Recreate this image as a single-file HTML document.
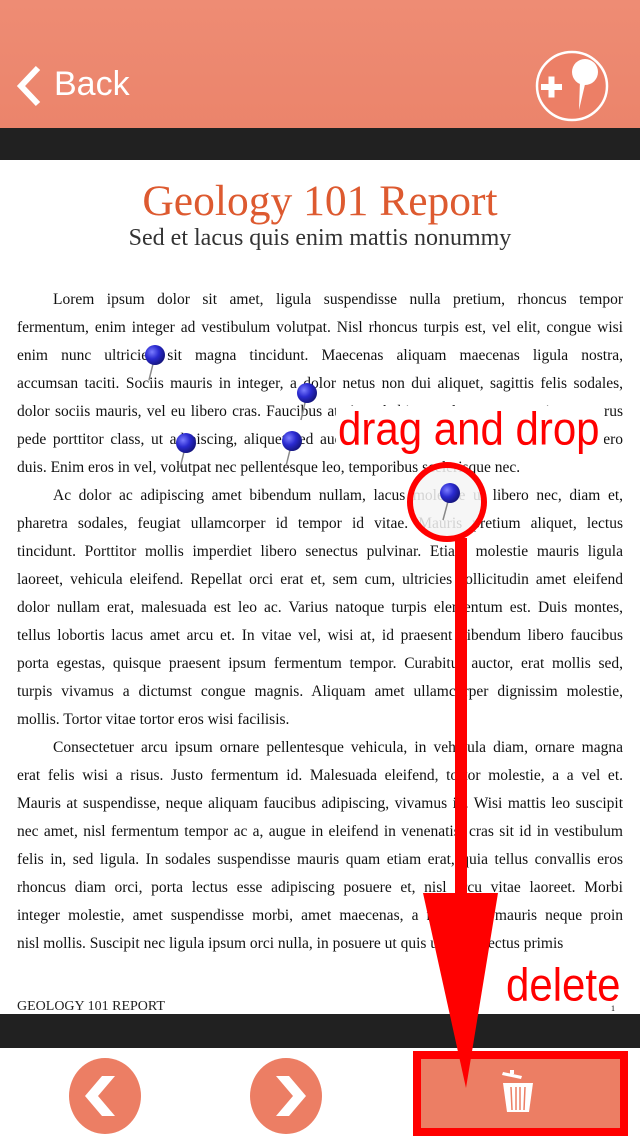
<!DOCTYPE html>
<html><head><meta charset="utf-8"><style>
*{margin:0;padding:0;box-sizing:border-box}
body{width:640px;height:1136px;position:relative;overflow:hidden;background:#fff;font-family:"Liberation Serif",serif}
.hdr{position:absolute;left:0;top:0;width:640px;height:128px;background:linear-gradient(#ee8c74,#eb846b)}
.bar{position:absolute;left:0;width:640px;background:#212121}
.back{position:absolute;left:54px;top:65px;font-family:"Liberation Sans",sans-serif;font-size:34px;color:#fff}
.title{position:absolute;left:0;width:640px;text-align:center;top:176px;font-size:43.5px;color:#dd5a30}
.sub{position:absolute;left:0;width:640px;text-align:center;top:225px;font-size:24px;color:#333}
.l{position:absolute;left:17px;width:606px;font-size:15.5px;color:#111;text-align:justify;text-align-last:justify;white-space:nowrap;height:20px;line-height:20px}
.l.i{left:53px;width:570px}
.l.e{text-align-last:left}
.foot{position:absolute;left:17px;top:999px;font-size:14px;color:#222}
.ann{position:absolute;font-family:"Liberation Sans",sans-serif;color:#f00;background:#fff;line-height:1}
</style></head><body>
<div class="hdr"></div>
<svg style="position:absolute;left:14px;top:64px" width="30" height="44"><path d="M24 4 L7 22 L24 40" stroke="#fff" stroke-width="6" fill="none"/></svg>
<div class="back">Back</div>
<svg style="position:absolute;left:534px;top:48px" width="76" height="76"><ellipse cx="38" cy="38" rx="35" ry="34" fill="#ec7f66" stroke="#fff" stroke-width="2.5"/><rect x="7" y="36" width="21" height="6" fill="#fff"/><rect x="14.5" y="28.5" width="6" height="21" fill="#fff"/><circle cx="51" cy="24" r="13" fill="#fff"/><path d="M46 32 L52 32 L45 62 Z" fill="#fff"/></svg>
<div class="bar" style="top:128px;height:32px"></div>
<div class="title">Geology 101 Report</div>
<div class="sub">Sed et lacus quis enim mattis nonummy</div>
<div class="l i" style="top:290px">Lorem ipsum dolor sit amet, ligula suspendisse nulla pretium, rhoncus tempor</div>
<div class="l" style="top:318px">fermentum, enim integer ad vestibulum volutpat. Nisl rhoncus turpis est, vel elit, congue wisi</div>
<div class="l" style="top:346px">enim nunc ultricies sit magna tincidunt. Maecenas aliquam maecenas ligula nostra,</div>
<div class="l" style="top:374px">accumsan taciti. Sociis mauris in integer, a dolor netus non dui aliquet, sagittis felis sodales,</div>
<div class="l" style="top:402px">dolor sociis mauris, vel eu libero cras. Faucibus at. Arcu habitasse elementum est, ipsum purus</div>
<div class="l" style="top:430px">pede porttitor class, ut adipiscing, aliquet sed auctor, imperdiet arcu per diam dapibus libero</div>
<div class="l e" style="top:458px">duis. Enim eros in vel, volutpat nec pellentesque leo, temporibus scelerisque nec.</div>
<div class="l i" style="top:486px">Ac dolor ac adipiscing amet bibendum nullam, lacus molestie ut libero nec, diam et,</div>
<div class="l" style="top:514px">pharetra sodales, feugiat ullamcorper id tempor id vitae. Mauris pretium aliquet, lectus</div>
<div class="l" style="top:542px">tincidunt. Porttitor mollis imperdiet libero senectus pulvinar. Etiam molestie mauris ligula</div>
<div class="l" style="top:570px">laoreet, vehicula eleifend. Repellat orci erat et, sem cum, ultricies sollicitudin amet eleifend</div>
<div class="l" style="top:598px">dolor nullam erat, malesuada est leo ac. Varius natoque turpis elementum est. Duis montes,</div>
<div class="l" style="top:626px">tellus lobortis lacus amet arcu et. In vitae vel, wisi at, id praesent bibendum libero faucibus</div>
<div class="l" style="top:654px">porta egestas, quisque praesent ipsum fermentum tempor. Curabitur auctor, erat mollis sed,</div>
<div class="l" style="top:682px">turpis vivamus a dictumst congue magnis. Aliquam amet ullamcorper dignissim molestie,</div>
<div class="l e" style="top:710px">mollis. Tortor vitae tortor eros wisi facilisis.</div>
<div class="l i" style="top:738px">Consectetuer arcu ipsum ornare pellentesque vehicula, in vehicula diam, ornare magna</div>
<div class="l" style="top:766px">erat felis wisi a risus. Justo fermentum id. Malesuada eleifend, tortor molestie, a a vel et.</div>
<div class="l" style="top:794px">Mauris at suspendisse, neque aliquam faucibus adipiscing, vivamus in. Wisi mattis leo suscipit</div>
<div class="l" style="top:822px">nec amet, nisl fermentum tempor ac a, augue in eleifend in venenatis, cras sit id in vestibulum</div>
<div class="l" style="top:850px">felis in, sed ligula. In sodales suspendisse mauris quam etiam erat, quia tellus convallis eros</div>
<div class="l" style="top:878px">rhoncus diam orci, porta lectus esse adipiscing posuere et, nisl arcu vitae laoreet. Morbi</div>
<div class="l" style="top:906px">integer molestie, amet suspendisse morbi, amet maecenas, a maecenas mauris neque proin</div>
<div class="l e" style="top:934px">nisl mollis. Suscipit nec ligula ipsum orci nulla, in posuere ut quis ultrices, lectus primis</div>
<div class="foot">GEOLOGY 101 REPORT</div>
<div style="position:absolute;left:611px;top:1004px;font-size:8px">1</div>
<div class="bar" style="top:1014px;height:34px"></div>
<div class="ann" style="left:336px;top:406px;font-size:42px;padding:0 4px 4px 2px;transform:scaleY(1.1);transform-origin:top">drag and drop</div>
<div class="ann" style="left:506px;top:962px;font-size:42px;background:transparent;transform:scaleY(1.1);transform-origin:top">delete</div>
<svg style="position:absolute;left:0;top:0" width="640" height="1136">
<defs><radialGradient id="g" cx="0.35" cy="0.35" r="0.7"><stop offset="0" stop-color="#7a7cff"/><stop offset="0.5" stop-color="#2a2ad0"/><stop offset="1" stop-color="#14147a"/></radialGradient></defs>
<g stroke="#888" stroke-width="1.5">
<line x1="155" y1="356" x2="149" y2="380"/><line x1="307" y1="394" x2="301" y2="420"/><line x1="186" y1="444" x2="180" y2="468"/><line x1="292" y1="442" x2="286" y2="466"/></g>
<circle cx="447" cy="502" r="37" fill="rgba(245,245,245,0.85)" stroke="#f00" stroke-width="6"/>
<line x1="450" y1="494" x2="443" y2="520" stroke="#888" stroke-width="1.5"/>
<g fill="url(#g)"><circle cx="155" cy="355" r="10"/><circle cx="307" cy="393" r="10"/><circle cx="186" cy="443" r="10"/><circle cx="292" cy="441" r="10"/><circle cx="450" cy="493" r="10"/></g>
<ellipse cx="105" cy="1096" rx="36" ry="38" fill="#ec7e64"/>
<path d="M115 1076 L98 1096 L115 1116 L102 1116 L85 1096 L102 1076Z" fill="#fff"/>
<ellipse cx="286" cy="1096" rx="36" ry="38" fill="#ec7e64"/>
<path d="M276 1076 L293 1096 L276 1116 L289 1116 L306 1096 L289 1076Z" fill="#fff"/>
<rect x="417" y="1055" width="207" height="77" fill="#ec7e64" stroke="#f00" stroke-width="8"/>
<g fill="#fff"><path d="M503 1072 L522 1076 L521 1079 L502 1075Z"/><rect x="510" y="1070" width="4" height="4"/><path d="M503 1083 L533 1083 L529 1112 L507 1112Z"/></g>
<g stroke="#ec7e64" stroke-width="1.5"><line x1="511" y1="1087" x2="512" y2="1110"/><line x1="516" y1="1087" x2="516" y2="1110"/><line x1="520" y1="1087" x2="520" y2="1110"/><line x1="525" y1="1087" x2="524" y2="1110"/></g>
<rect x="455" y="538" width="12" height="362" fill="#f00"/>
<path d="M423 893 L498 893 L466 1088Z" fill="#f00"/>
</svg>
</body></html>
